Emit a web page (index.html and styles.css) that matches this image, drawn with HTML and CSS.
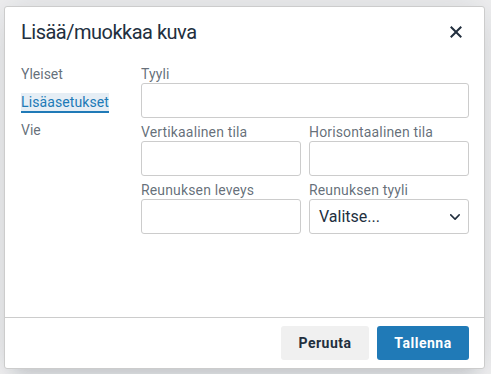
FILE: index.html
```html
<!DOCTYPE html>
<html lang="fi">
<head>
<meta charset="utf-8">
<title>Lisää/muokkaa kuva</title>
<link rel="stylesheet" href="styles.css">
</head>
<body>
<div class="dialog" role="dialog">
  <div class="dialog-header">
    <div class="dialog-title">Lisää/muokkaa kuva</div>
    <button class="close-btn" aria-label="Sulje">
      <svg width="24" height="24" viewBox="0 0 24 24"><path d="M17.953 7.453L13.422 12l4.531 4.547-1.406 1.406L12 13.422l-4.547 4.531-1.406-1.406L10.578 12 6.047 7.453l1.406-1.406L12 10.578l4.547-4.531z" fill="#222f3e"/></svg>
    </button>
  </div>
  <div class="dialog-body">
    <div class="nav">
      <div class="nav-item">Yleiset</div>
      <div class="nav-item active">Lisäasetukset</div>
      <div class="nav-item">Vie</div>
    </div>
    <div class="form">
      <div class="group">
        <label class="label">Tyyli</label>
        <input class="input" type="text">
      </div>
      <div class="row">
        <div class="group">
          <label class="label">Vertikaalinen tila</label>
          <input class="input" type="text">
        </div>
        <div class="group">
          <label class="label">Horisontaalinen tila</label>
          <input class="input" type="text">
        </div>
      </div>
      <div class="row">
        <div class="group">
          <label class="label">Reunuksen leveys</label>
          <input class="input" type="text">
        </div>
        <div class="group">
          <label class="label">Reunuksen tyyli</label>
          <div class="select">
            <span>Valitse...</span>
            <svg width="10" height="10" viewBox="0 0 10 10"><path d="M8.7 2.2c.3-.3.8-.3 1 0 .4.4.4.9 0 1.2L5.7 7.8c-.3.3-.9.3-1.2 0L.2 3.4a.8.8 0 0 1 0-1.2c.3-.3.8-.3 1.1 0L5 6l3.7-3.8z" fill="#222f3e"/></svg>
          </div>
        </div>
      </div>
    </div>
  </div>
  <div class="dialog-footer">
    <button class="btn btn-secondary">Peruuta</button>
    <button class="btn btn-primary">Tallenna</button>
  </div>
</div>
</body>
</html>
```
FILE: styles.css
```css
* { box-sizing: border-box; }
html, body { margin: 0; padding: 0; }
body {
  width: 491px;
  height: 374px;
  background: #f1f1f2;
  font-family: Roboto, "Liberation Sans", sans-serif;
  color: #222f3e;
  padding: 6px 6px 5px 4px;
  overflow: hidden;
}
.dialog {
  width: 481px;
  height: 363px;
  background: #fff;
  border: 1px solid #cccccc;
  border-radius: 3px;
  box-shadow: 0 16px 16px -10px rgba(34,47,62,.15), 0 0 40px 1px rgba(34,47,62,.15);
  display: flex;
  flex-direction: column;
}
.dialog-header {
  display: flex;
  align-items: center;
  justify-content: space-between;
  padding: 8px 11px 0 16px;
  height: 42px;
}
.dialog-title {
  font-size: 20px;
  line-height: 26px;
  letter-spacing: -0.5px;
  color: #222f3e;
}
.close-btn {
  width: 34px;
  height: 34px;
  border: 0;
  background: transparent;
  padding: 0;
  display: flex;
  align-items: center;
  justify-content: center;
}
.dialog-body {
  flex: 1;
  display: flex;
  padding: 16px 15px 0 16px;
}
.nav {
  width: 120px;
  flex: none;
  display: flex;
  flex-direction: column;
  gap: 8px;
}
.nav-item {
  align-self: flex-start;
  font-size: 14px;
  line-height: 18px;
  color: rgba(34,47,62,.7);
  border-bottom: 2px solid transparent;
}
.nav-item.active {
  color: #207ab7;
  border-bottom-color: #207ab7;
  background: #e6eef5;
  letter-spacing: 0.1px;
}
.form {
  flex: 1;
  display: flex;
  flex-direction: column;
  gap: 5px;
}
.row {
  display: grid;
  grid-template-columns: 1fr 1fr;
  gap: 8px;
}
.group {
  display: flex;
  flex-direction: column;
}
.label {
  font-size: 14px;
  line-height: 18px;
  letter-spacing: 0.15px;
  color: rgba(34,47,62,.7);
}
.input, .select {
  height: 35px;
  width: 100%;
  border: 1px solid #cccccc;
  border-radius: 3px;
  background: #fff;
  font-family: inherit;
  font-size: 16px;
  color: #222f3e;
  padding: 5px 8px;
}
.select {
  display: flex;
  align-items: center;
  justify-content: space-between;
  padding: 0 8px 0 9px;
}
.dialog-footer {
  border-top: 1px solid #cccccc;
  padding: 8px 15px 8px 16px;
  display: flex;
  justify-content: flex-end;
  gap: 8px;
}
.btn {
  height: 34px;
  border: 0;
  border-radius: 3px;
  font-family: inherit;
  font-size: 14px;
  font-weight: 700;
  letter-spacing: 0.5px;
  padding: 0;
}
.btn-secondary {
  width: 88px;
  background: #f0f0f0;
  color: #222f3e;
}
.btn-primary {
  width: 92px;
  background: #207ab7;
  color: #fff;
}
```
